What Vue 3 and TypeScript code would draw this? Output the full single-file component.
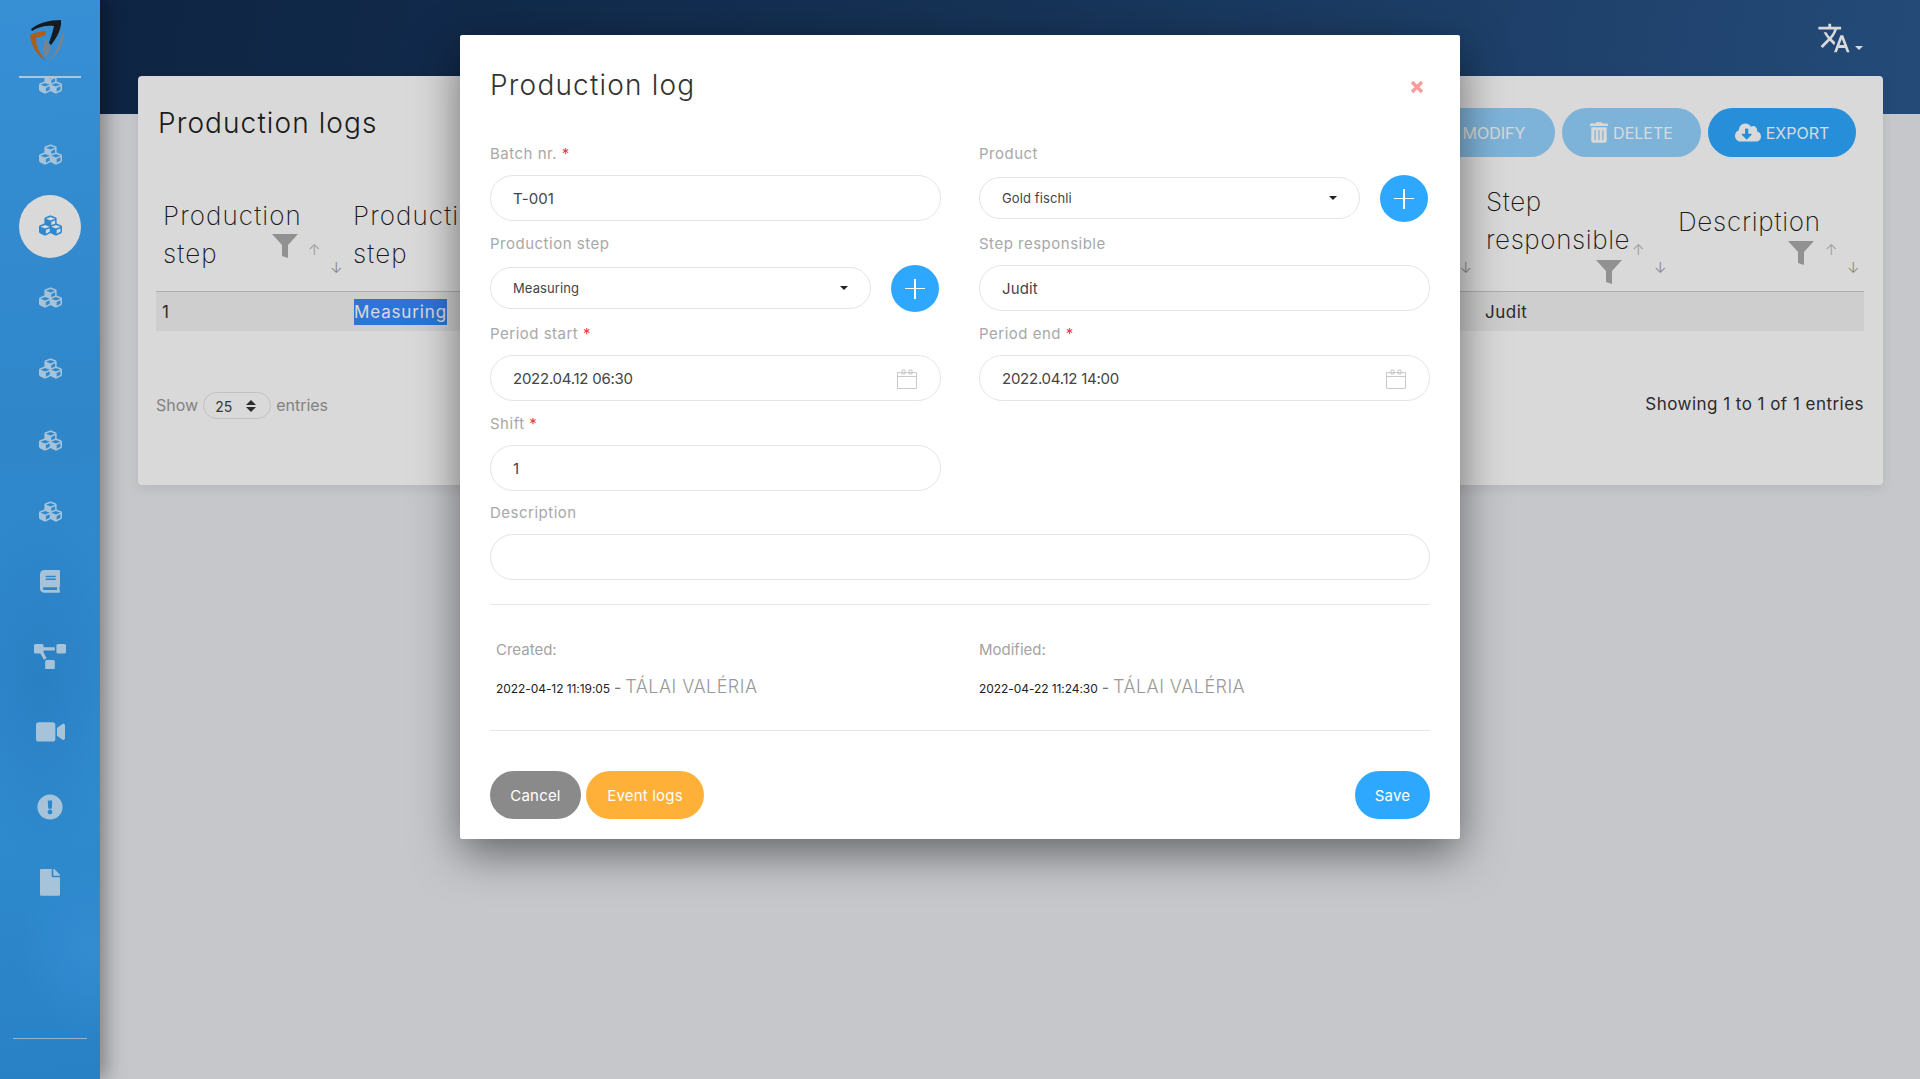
<script setup lang="ts">
interface NavIcon {
  id: number;
  viewBox: string;
  d: string;
  width: number;
  cube: boolean;
  active?: boolean;
}

const cubes =
  "M488.6 250.2L392 214V105.5c0-15-9.3-28.4-23.4-33.7l-100-37.5c-8.1-3.1-17.1-3.1-25.3 0l-100 37.5c-14.1 5.3-23.4 18.7-23.4 33.7V214l-96.6 36.2C9.3 255.5 0 268.9 0 283.9V394c0 13.6 7.7 26.1 19.9 32.2l100 50c10.1 5.1 22.1 5.1 32.2 0l103.9-52 103.9 52c10.1 5.1 22.1 5.1 32.2 0l100-50c12.2-6.1 19.9-18.6 19.9-32.2V283.9c0-15-9.3-28.4-23.4-33.7zM358 214.8l-85 31.9v-68.2l85-37v73.3zM154 104.1l102-38.2 102 38.2v.6l-102 41.4-102-41.4v-.6zm84 291.1l-85 42.5v-79.1l85-38.8v75.4zm0-112l-102 41.4-102-41.4v-.6l102-38.2 102 38.2v.6zm240 112l-85 42.5v-79.1l85-38.8v75.4zm0-112l-102 41.4-102-41.4v-.6l102-38.2 102 38.2v.6z";

const navIcons: NavIcon[] = [
  ...[0, 1, 2, 3, 4, 5, 6].map((id) => ({
    id,
    viewBox: "0 0 512 512",
    d: cubes,
    width: 23,
    cube: true,
    active: id === 2,
  })),
  {
    id: 7,
    viewBox: "0 0 448 512",
    width: 20,
    cube: false,
    d: "M448 360V24c0-13.3-10.7-24-24-24H96C43 0 0 43 0 96v320c0 53 43 96 96 96h328c13.3 0 24-10.7 24-24v-16c0-7.5-3.5-14.3-8.9-18.7-4.2-15.4-4.2-59.3 0-74.7 5.4-4.3 8.9-11.1 8.9-18.6zM128 134c0-3.3 2.7-6 6-6h212c3.3 0 6 2.7 6 6v20c0 3.3-2.7 6-6 6H134c-3.3 0-6-2.7-6-6v-20zm0 64c0-3.3 2.7-6 6-6h212c3.3 0 6 2.7 6 6v20c0 3.3-2.7 6-6 6H134c-3.3 0-6-2.7-6-6v-20zm253.4 250H96c-17.7 0-32-14.3-32-32 0-17.6 14.4-32 32-32h285.4c-1.9 17.1-1.9 46.9 0 64z",
  },
  {
    id: 8,
    viewBox: "0 0 640 512",
    width: 32,
    cube: false,
    d: "M384 320H256c-17.67 0-32 14.33-32 32v128c0 17.67 14.33 32 32 32h128c17.67 0 32-14.33 32-32V352c0-17.67-14.33-32-32-32zM192 32c0-17.67-14.33-32-32-32H32C14.33 0 0 14.33 0 32v128c0 17.67 14.33 32 32 32h95.72l73.16 128.04C211.98 300.98 232.4 288 256 288h.28L192 175.51V128h224V64H192V32zM608 0H480c-17.67 0-32 14.33-32 32v128c0 17.67 14.33 32 32 32h128c17.67 0 32-14.33 32-32V32c0-17.67-14.33-32-32-32z",
  },
  {
    id: 9,
    viewBox: "0 0 576 512",
    width: 29,
    cube: false,
    d: "M336.2 64H47.8C21.4 64 0 85.4 0 111.8v288.4C0 426.6 21.4 448 47.8 448h288.4c26.4 0 47.8-21.4 47.8-47.8V111.8c0-26.4-21.4-47.8-47.8-47.8zm189.4 37.7L416 177.3v157.4l109.6 75.5c21.2 14.6 50.4-.3 50.4-25.8V127.5c0-25.4-29.1-40.4-50.4-25.8z",
  },
  {
    id: 10,
    viewBox: "0 0 512 512",
    width: 26,
    cube: false,
    d: "M504 256c0 136.997-111.043 248-248 248S8 392.997 8 256C8 119.083 119.043 8 256 8s248 111.083 248 248zm-248 50c-25.405 0-46 20.595-46 46s20.595 46 46 46 46-20.595 46-46-20.595-46-46-46zm-43.673-165.346l7.418 136c.347 6.364 5.609 11.346 11.982 11.346h48.546c6.373 0 11.635-4.982 11.982-11.346l7.418-136c.375-6.874-5.098-12.654-11.982-12.654h-63.383c-6.884 0-12.356 5.78-11.981 12.654z",
  },
  {
    id: 11,
    viewBox: "0 0 384 512",
    width: 20,
    cube: false,
    d: "M224 136V0H24C10.7 0 0 10.7 0 24v464c0 13.3 10.7 24 24 24h336c13.3 0 24-10.7 24-24V160H248c-13.2 0-24-10.8-24-24zm160-14.1v6.1H256V0h6.1c6.4 0 12.5 2.5 17 7l97.9 98c4.5 4.5 7 10.6 7 16.9z",
  },
];
</script>

<template>
  <div class="page">
    <aside class="sidebar">
      <div class="logo">
        <svg viewBox="0 0 60 55" width="60" height="55">
          <path d="M28 24 L33 33 L28 43 C24 36 24 30 28 24Z" fill="#8d9aa6" />
          <path d="M29 47 C37 40 43 28 45 14 C47 30 40 41 29 47Z" fill="#8d9aa6" />
          <path d="M12 20 C18 17 24 16 28 16 L27 21 C24 21 21 22 18 23 C18 33 23 40 29 47 C20 41 13 32 12 20Z" fill="#c96f22" />
          <path d="M13 14 C20 8 32 5 43 5 C44 14 38 24 33 30 L31 28 C33 22 35 16 36 11 C28 10 20 12 14 16Z" fill="#1c1f24" />
        </svg>
      </div>
      <nav class="nav">
        <div class="nav-inner">
          <a
            v-for="icon in navIcons"
            :key="icon.id"
            class="nav-item"
            :class="{ cube: icon.cube, active: icon.active }"
          >
            <svg :viewBox="icon.viewBox" :width="icon.width" fill="currentColor">
              <path :d="icon.d" />
            </svg>
          </a>
        </div>
      </nav>
      <div class="side-foot"></div>
    </aside>

    <main class="main">
      <header class="band">
        <div class="lang">
          <svg viewBox="0 0 24 24" width="34" height="34" fill="currentColor">
            <path d="M12.87 15.07l-2.54-2.51.03-.03c1.74-1.94 2.98-4.17 3.64-6.53H17V4h-7V2H8v2H1v1.99h11.17C11.5 7.92 10.44 9.75 9 11.35 8.07 10.32 7.3 9.19 6.69 8h-2c.73 1.63 1.73 3.17 2.98 4.56l-5.09 5.02L4 19l5-5 3.11 3.11.76-2.04zM18.5 10h-2L12 22h2l1.12-3h4.75L21 22h2l-4.5-12zm-2.62 7l1.62-4.33L19.12 17h-3.24z" />
          </svg>
          <span class="lang-caret"></span>
        </div>
      </header>

      <section class="card">
        <div class="card-head">
          <h1 class="card-title">Production logs</h1>
          <div class="actions">
            <button class="act disabled act-modify">MODIFY</button>
            <button class="act disabled act-delete">
              <svg viewBox="0 0 448 512" width="18" height="21" fill="currentColor">
                <path d="M32 464a48 48 0 0 0 48 48h288a48 48 0 0 0 48-48V128H32zm272-256a16 16 0 0 1 32 0v224a16 16 0 0 1-32 0zm-96 0a16 16 0 0 1 32 0v224a16 16 0 0 1-32 0zm-96 0a16 16 0 0 1 32 0v224a16 16 0 0 1-32 0zM432 32H312l-9.4-18.7A24 24 0 0 0 281.1 0H166.8a23.72 23.72 0 0 0-21.4 13.3L136 32H16A16 16 0 0 0 0 48v32a16 16 0 0 0 16 16h416a16 16 0 0 0 16-16V48a16 16 0 0 0-16-16z" />
              </svg>
              DELETE
            </button>
            <button class="act act-export">
              <svg viewBox="0 0 640 512" width="26" height="21" fill="currentColor">
                <path d="M537.6 226.6c4.1-10.7 6.4-22.4 6.4-34.6 0-53-43-96-96-96-19.7 0-38.1 6-53.3 16.2C367 64.2 315.3 32 256 32c-88.4 0-160 71.6-160 160 0 2.7.1 5.4.2 8.1C40.2 219.8 0 273.2 0 336c0 79.5 64.5 144 144 144h368c70.7 0 128-57.3 128-128 0-61.9-44-113.6-102.4-125.4zm-132.9 88.7L299.3 420.7c-6.2 6.2-16.4 6.2-22.6 0L171.3 315.3c-10.1-10.1-2.9-27.3 11.3-27.3H248V176c0-8.8 7.2-16 16-16h48c8.8 0 16 7.2 16 16v112h65.4c14.2 0 21.4 17.2 11.3 27.3z" />
              </svg>
              EXPORT
            </button>
          </div>
        </div>

        <div class="table">
          <div class="th th-step">
            Production<br />step
            <svg class="funnel" viewBox="0 0 26 25"><path d="M0 0H26L16 11V24L10 22V11Z" /></svg>
            <span class="sort up">↑</span>
            <span class="sort down">↓</span>
          </div>
          <div class="th th-name">
            Production<br />step
            <span class="sort down">↓</span>
          </div>
          <div class="th th-resp">
            Step<br />responsible
            <svg class="funnel" viewBox="0 0 26 25"><path d="M0 0H26L16 11V24L10 22V11Z" /></svg>
            <span class="sort up">↑</span>
            <span class="sort down">↓</span>
          </div>
          <div class="th th-desc">
            Description
            <svg class="funnel" viewBox="0 0 26 25"><path d="M0 0H26L16 11V24L10 22V11Z" /></svg>
            <span class="sort up">↑</span>
            <span class="sort down">↓</span>
          </div>
          <div class="td">1</div>
          <div class="td"><span class="selected">Measuring</span></div>
          <div class="td">Judit</div>
          <div class="td"></div>
        </div>

        <div class="table-foot">
          <div class="length">
            Show
            <span class="length-select">25
              <span class="spin"></span>
            </span>
            entries
          </div>
          <div class="info">Showing 1 to 1 of 1 entries</div>
        </div>
      </section>
    </main>

    <div class="overlay">
      <div class="modal">
        <div class="modal-head">
          <h2 class="modal-title">Production log</h2>
          <svg class="close" viewBox="0 0 14 14" width="14" height="14">
            <path d="M2 2L12 12M12 2L2 12" stroke="#ff9a9a" stroke-width="3.4" />
          </svg>
        </div>

        <div class="form">
          <div class="group">
            <label>Batch nr. <i>*</i></label>
            <div class="control">T-001</div>
          </div>
          <div class="group">
            <label>Product</label>
            <div class="with-add">
              <div class="control select">Gold fischli<span class="caret"></span></div>
              <span class="add"><span class="plus"></span></span>
            </div>
          </div>
          <div class="group">
            <label>Production step</label>
            <div class="with-add">
              <div class="control select">Measuring<span class="caret"></span></div>
              <span class="add"><span class="plus"></span></span>
            </div>
          </div>
          <div class="group">
            <label>Step responsible</label>
            <div class="control">Judit</div>
          </div>
          <div class="group">
            <label>Period start <i>*</i></label>
            <div class="control date">
              2022.04.12 06:30
              <svg class="cal" viewBox="0 0 20 20" width="20" height="20">
                <path d="M.5 3.5h19v16H.5zM.5 7.5h19M5 1v4h3V1zM12 1v4h3V1z" fill="none" stroke="#c9c9c9" />
              </svg>
            </div>
          </div>
          <div class="group">
            <label>Period end <i>*</i></label>
            <div class="control date">
              2022.04.12 14:00
              <svg class="cal" viewBox="0 0 20 20" width="20" height="20">
                <path d="M.5 3.5h19v16H.5zM.5 7.5h19M5 1v4h3V1zM12 1v4h3V1z" fill="none" stroke="#c9c9c9" />
              </svg>
            </div>
          </div>
          <div class="group">
            <label>Shift <i>*</i></label>
            <div class="control">1</div>
          </div>
          <div class="group"></div>
          <div class="group wide">
            <label>Description</label>
            <div class="control"></div>
          </div>
        </div>

        <div class="meta">
          <div class="meta-col first">
            <div class="meta-label">Created:</div>
            <div class="meta-line"><span class="stamp">2022-04-12 11:19:05</span> - <span class="who">TÁLAI VALÉRIA</span></div>
          </div>
          <div class="meta-col">
            <div class="meta-label">Modified:</div>
            <div class="meta-line"><span class="stamp">2022-04-22 11:24:30</span> - <span class="who">TÁLAI VALÉRIA</span></div>
          </div>
        </div>

        <div class="modal-foot">
          <button class="btn btn-cancel">Cancel</button>
          <button class="btn btn-logs">Event logs</button>
          <button class="btn btn-save">Save</button>
        </div>
      </div>
    </div>
  </div>
</template>

<style>
html,
body {
  margin: 0;
  overflow: hidden;
}
</style>

<style scoped>
.page {
  position: relative;
  display: flex;
  height: 1079px;
  overflow: hidden;
  background: #e9eaef;
  font-family: Inter, "Liberation Sans", sans-serif;
  color: #333;
}

.sidebar {
  position: relative;
  z-index: 2;
  display: flex;
  flex-direction: column;
  flex: 0 0 100px;
  box-shadow: 6px 0 18px rgba(0, 0, 0, 0.35);
  background:
    radial-gradient(ellipse 70px 90px at 90px 950px, rgba(68, 174, 255, 0.5) 0%, rgba(68, 174, 255, 0) 100%),
    radial-gradient(ellipse 90px 180px at 40px 680px, #3197e6 0%, rgba(49, 151, 230, 0) 100%),
    linear-gradient(175deg, #41a9fa 0%, #389fee 40%, #3aa4f4 70%, #3198e8 100%);
}

.logo {
  height: 61px;
  margin: 0 19px;
  padding-top: 15px;
  border-bottom: 2px solid rgba(255, 255, 255, 0.75);
}
.logo svg {
  display: block;
  margin-left: -1px;
}

.nav {
  flex: 1;
  overflow: hidden;
}
.nav-inner {
  margin-top: -30.5px;
  display: flex;
  flex-direction: column;
}
.nav-item {
  display: flex;
  align-items: center;
  justify-content: center;
  height: 75.3px;
  flex: none;
  color: #c4e6ff;
}
.nav-item svg {
  display: block;
}
.nav-item.cube {
  height: 71.4px;
}
.cube + .nav-item:not(.cube) {
  margin-top: -3.5px;
}
.nav-item.active {
  position: relative;
  color: #36a0f5;
}
.nav-item.active::before {
  content: "";
  position: absolute;
  left: 19px;
  top: 5px;
  width: 62px;
  height: 63px;
  border-radius: 50%;
  background: #fff;
}
.nav-item.active svg {
  position: relative;
}

.side-foot {
  height: 40px;
  margin: 0 13px;
  border-top: 1px solid rgba(255, 255, 255, 0.6);
  flex: none;
}

.main {
  flex: 1;
  min-width: 0;
}

.band {
  height: 114px;
  display: flex;
  justify-content: flex-end;
  background: linear-gradient(100deg, #112b4f 0%, #193a63 45%, #2b588e 100%);
}

.lang {
  display: flex;
  align-items: flex-start;
  padding: 21px 57px 0 0;
  color: #fff;
}
.lang-caret {
  margin: 25px 0 0 4px;
  border: 4px solid transparent;
  border-top-color: #fff;
  border-bottom: 0;
}

.card {
  height: 409px;
  margin: -38px 37px 0 38px;
  padding: 0 19px 0 18px;
  box-sizing: border-box;
  background: #fff;
  border-radius: 4px;
  box-shadow: 0 4px 12px rgba(0, 0, 0, 0.08);
}

.card-head {
  display: flex;
  align-items: flex-start;
  justify-content: space-between;
  padding: 32px 8px 0 2px;
  height: 81px;
  box-sizing: border-box;
}
.card-title {
  margin: 0;
  font-size: 28px;
  line-height: 30px;
  font-weight: 300;
  letter-spacing: 1.1px;
  color: #222;
}
.actions {
  display: flex;
  gap: 7px;
}
.act {
  display: flex;
  align-items: center;
  justify-content: center;
  gap: 5px;
  height: 49px;
  border: 0;
  border-radius: 25px;
  background: #2ea9ff;
  color: #fff;
  font: 400 16px Inter, "Liberation Sans", sans-serif;
}
.act.disabled {
  opacity: 0.5;
}
.act-modify {
  width: 140px;
  padding-left: 24px;
}
.act-delete {
  width: 139px;
}
.act-export {
  width: 148px;
}

.table {
  display: grid;
  grid-template-columns: 190px 1134px 193px 191px;
  grid-template-rows: 116px 40px;
  margin-top: 18px;
}
.th {
  position: relative;
  font-size: 26px;
  font-weight: 200;
  line-height: 38px;
  letter-spacing: 1.1px;
  color: #222;
}
.th-step,
.th-name {
  padding: 22px 0 0 7px;
}
.th-resp {
  padding: 8px 0 0 6px;
}
.th-desc {
  padding: 28px 0 0 5px;
}
.th-resp {
  letter-spacing: 0.6px;
}
.th-desc {
  letter-spacing: 0.75px;
}
.funnel {
  position: absolute;
  left: 116px;
  top: 59px;
  width: 26px;
  height: 25px;
  fill: #ababab;
}
.th-resp .funnel {
  top: 85px;
}
.th-desc .funnel {
  top: 66px;
  left: 115px;
}
.sort {
  position: absolute;
  font-size: 15px;
  line-height: 18px;
  font-weight: 300;
  color: #b5b5b5;
  letter-spacing: 0;
}
.sort.up {
  left: 152px;
  top: 66px;
}
.sort.down {
  left: 174px;
  top: 84px;
  color: #9a9a9a;
}
.th-name .sort.down {
  left: auto;
  right: 8px;
}
.td {
  display: flex;
  align-items: center;
  padding-left: 6px;
  background: #f2f2f2;
  border-top: 1px solid #ccc;
  font-size: 17px;
  font-weight: 400;
  letter-spacing: 0.5px;
  color: #333;
}
.td:nth-child(6) {
  padding-left: 8px;
}
.td:nth-child(7) {
  padding-left: 5px;
}
.selected {
  display: inline-block;
  height: 26px;
  line-height: 26px;
  background: #3589ff;
  color: #fff;
  letter-spacing: 0.85px;
}

.table-foot {
  display: flex;
  justify-content: space-between;
  align-items: center;
  margin-top: 60px;
  height: 27px;
  font-size: 16px;
  font-weight: 400;
}
.length {
  display: flex;
  align-items: center;
  gap: 5px;
  padding-top: 1px;
  color: #999;
}
.length-select {
  position: relative;
  width: 68px;
  height: 27px;
  box-sizing: border-box;
  padding: 2px 0 0 11px;
  border: 1px solid #e3e3e3;
  border-radius: 14px;
  font-size: 14px;
  line-height: 24px;
  color: #444;
}
.spin {
  position: absolute;
  right: 14px;
  top: 7px;
  width: 0;
  height: 0;
  border: 5px solid transparent;
  border-bottom: 5px solid #333;
  border-top: 0;
}
.spin::after {
  content: "";
  position: absolute;
  left: -5px;
  top: 7px;
  border: 5px solid transparent;
  border-top: 5px solid #333;
  border-bottom: 0;
}
.info {
  font-size: 17px;
  color: #333;
  letter-spacing: 0.47px;
  margin-top: -1px;
}

.overlay {
  position: absolute;
  inset: 0;
  z-index: 5;
  display: flex;
  justify-content: center;
  align-items: flex-start;
  padding-top: 35px;
  background: rgba(0, 0, 0, 0.15);
}

.modal {
  width: 1000px;
  height: 804px;
  box-sizing: border-box;
  padding: 0 30px 20px;
  background: #fff;
  border-radius: 2px;
  box-shadow: 0 14px 45px rgba(0, 0, 0, 0.5);
}

.modal-head {
  position: relative;
  height: 107px;
  padding-top: 30px;
  box-sizing: border-box;
}
.modal-title {
  margin: 0;
  font-size: 28px;
  line-height: 40px;
  font-weight: 300;
  letter-spacing: 1.2px;
  color: #333;
}
.close {
  position: absolute;
  right: 6px;
  top: 45px;
}

.form {
  display: grid;
  grid-template-columns: 1fr 1fr;
  column-gap: 38px;
  row-gap: 11px;
}
.group.wide {
  grid-column: 1 / 3;
  margin-top: -1px;
}
.group label {
  display: block;
  height: 22px;
  margin-bottom: 11px;
  font-size: 15px;
  line-height: 24px;
  color: #a8a8a8;
  letter-spacing: 0.5px;
}
.group label i {
  font-style: normal;
  color: #f0324f;
}
.control {
  position: relative;
  display: flex;
  align-items: center;
  height: 46px;
  box-sizing: border-box;
  padding-left: 22px;
  border: 1px solid #e4e4e4;
  border-radius: 23px;
  font-size: 15px;
  color: #444;
  letter-spacing: 0.1px;
}
.control.date {
  letter-spacing: -0.25px;
}
.with-add {
  display: flex;
  align-items: center;
  gap: 20px;
  height: 46px;
  padding-right: 2px;
}
.control.select {
  flex: 1;
  height: 42px;
  font-size: 13px;
}
.caret {
  position: absolute;
  right: 22px;
  top: 18px;
  border: 4px solid transparent;
  border-top-color: #222;
  border-bottom: 0;
}
.add {
  position: relative;
  flex: 0 0 48px;
  height: 47px;
  border-radius: 50%;
  background: #2ea8ff;
}
.plus {
  position: absolute;
  left: 14px;
  top: 23px;
  width: 20px;
  height: 1.5px;
  background: #fff;
}
.plus::after {
  content: "";
  position: absolute;
  left: 9px;
  top: -9px;
  width: 1.5px;
  height: 20px;
  background: #fff;
}
.cal {
  position: absolute;
  right: 23px;
  top: 13px;
}

.meta {
  display: grid;
  grid-template-columns: 1fr 1fr;
  column-gap: 38px;
  height: 127px;
  box-sizing: border-box;
  margin-top: 24px;
  padding-top: 34px;
  border-top: 1px solid #e8e8e8;
  border-bottom: 1px solid #e8e8e8;
}
.meta-col.first {
  padding-left: 6px;
}
.meta-label {
  font-size: 15px;
  line-height: 22px;
  color: #a3a3a3;
}
.meta-line {
  display: flex;
  align-items: baseline;
  gap: 4px;
  margin-top: 14px;
  line-height: 24px;
  font-size: 16px;
  color: #777;
}
.stamp {
  font-size: 12px;
  color: #222;
  letter-spacing: -0.07px;
}
.who {
  font-size: 18px;
  font-weight: 300;
  color: #999;
  letter-spacing: 0.45px;
}

.modal-foot {
  display: flex;
  gap: 5px;
  margin-top: 40px;
}
.btn {
  height: 48px;
  border: 0;
  border-radius: 24px;
  color: #fff;
  font: 400 15px Inter, "Liberation Sans", sans-serif;
  letter-spacing: 0.2px;
}
.btn-cancel {
  width: 91px;
  background: #8a8a8a;
}
.btn-logs {
  width: 118px;
  background: #ffb038;
}
.btn-save {
  width: 75px;
  margin-left: auto;
  background: #2ea8ff;
}
</style>
